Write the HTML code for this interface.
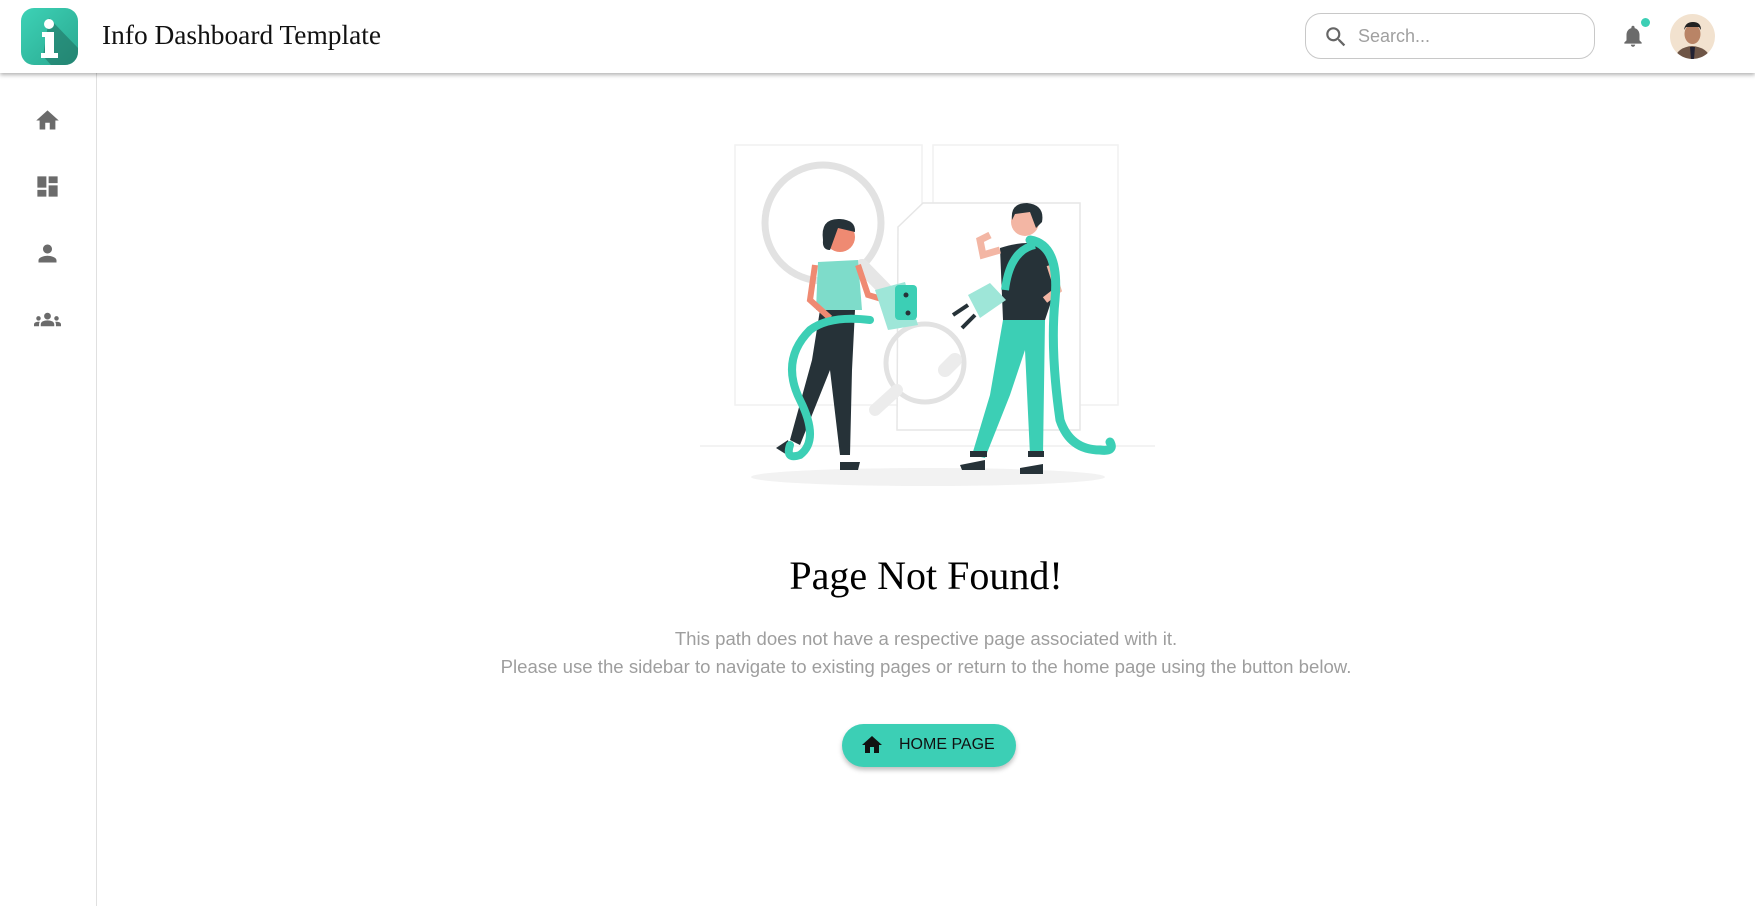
<!DOCTYPE html>
<html><head><meta charset="utf-8"><style>
*{margin:0;padding:0;box-sizing:border-box}
html,body{width:1755px;height:906px;overflow:hidden;background:#fff;font-family:"Liberation Sans",sans-serif}
.hdr{position:absolute;left:0;top:0;width:1755px;height:73px;background:#fff;box-shadow:0 2px 4px rgba(0,0,0,.3);z-index:2}
.logo{position:absolute;left:21px;top:8px;width:57px;height:57px;border-radius:13px;background:linear-gradient(135deg,#3dd2b6,#2aa890);overflow:hidden}
.title{position:absolute;left:102px;top:20px;font-family:"Liberation Serif",serif;font-size:27.4px;color:#111}
.search{position:absolute;left:1305px;top:13px;width:290px;height:46px;border:1px solid #c8c8c8;border-radius:16px}
.search span{position:absolute;left:52px;top:12px;font-size:18px;color:#a0a0a0}
.side{position:absolute;left:0;top:73px;width:97px;height:833px;border-right:1px solid #e0e0e0}
.side svg{position:absolute;left:34px}
h1{position:absolute;left:97px;width:1658px;top:552px;text-align:center;font-family:"Liberation Serif",serif;font-weight:normal;font-size:40px;color:#000}
.p{position:absolute;left:97px;width:1658px;text-align:center;font-size:18.6px;color:#9e9e9e}
.btn{position:absolute;left:842px;top:724px;width:174px;height:43px;border-radius:22px;background:#3ccfb5;box-shadow:0 3px 5px rgba(0,0,0,.25);font-size:16px;color:#111}
.btn span{position:absolute;left:57px;top:12px}
</style></head><body>
<div class="hdr">
 <div class="logo"><svg width="57" height="57"><path d="M28 10 L57 40 L57 57 L30 57 L22 48 Z" fill="#1f6b5c" opacity=".55"/><circle cx="28" cy="16" r="5" fill="#fff"/><path d="M21 24h12v21h4v5H20v-5h4V29h-3z" fill="#fff"/></svg></div>
 <div class="title">Info Dashboard Template</div>
 <div class="search"><svg style="position:absolute;left:17px;top:10px" width="26" height="26" viewBox="0 0 24 24"><path fill="#666" d="M15.5 14h-.79l-.28-.27A6.470 6.470 0 0 0 16 9.5 6.5 6.5 0 1 0 9.5 16c1.61 0 3.09-.59 4.23-1.57l.27.28v.79l5 4.99L20.49 19l-4.99-5zm-6 0C7.010 14 5 11.99 5 9.5S7.010 5 9.5 5 14 7.010 14 9.5 11.99 14 9.5 14z"/></svg><span>Search...</span></div>
 <svg style="position:absolute;left:1620px;top:23px" width="26" height="26" viewBox="0 0 24 24"><path fill="#6b6b6b" d="M12 22c1.1 0 2-.9 2-2h-4c0 1.1.89 2 2 2zm6-6v-5c0-3.07-1.64-5.64-4.5-6.32V4c0-.83-.67-1.5-1.5-1.5s-1.5.67-1.5 1.5v.68C7.63 5.36 6 7.92 6 11v5l-2 2v1h16v-1l-2-2z"/></svg>
 <div style="position:absolute;left:1641px;top:18px;width:9px;height:9px;border-radius:50%;background:#3ccfb5"></div>
 <svg style="position:absolute;left:1670px;top:14px" width="45" height="45"><defs><clipPath id="c"><circle cx="22.5" cy="22.5" r="22.5"/></clipPath></defs><g clip-path="url(#c)"><rect width="45" height="45" fill="#f2e2cf"/><path d="M4 45 Q8 33 22 32 Q37 33 41 45Z" fill="#6e5546"/><path d="M20 33h5l-1 12h-3z" fill="#223"/><ellipse cx="22.5" cy="20" rx="8" ry="10" fill="#b98466"/><path d="M14 16 Q15 8 23 8 Q31 8 31 16 L29 13 L16 13Z" fill="#222"/></g></svg>
</div>
<div class="side">
 <svg style="top:34px" width="27" height="27" viewBox="0 0 24 24"><path fill="#6b6b6b" d="M10 20v-6h4v6h5v-8h3L12 3 2 12h3v8z"/></svg>
 <svg style="top:100px" width="27" height="27" viewBox="0 0 24 24"><path fill="#6b6b6b" d="M3 13h8V3H3v10zm0 8h8v-6H3v6zm10 0h8V11h-8v10zm0-18v6h8V3h-8z"/></svg>
 <svg style="top:167px" width="27" height="27" viewBox="0 0 24 24"><path fill="#6b6b6b" d="M12 12c2.21 0 4-1.79 4-4s-1.79-4-4-4-4 1.79-4 4 1.79 4 4 4zm0 2c-2.67 0-8 1.34-8 4v2h16v-2c0-2.660-5.33-4-8-4z"/></svg>
 <svg style="top:233px" width="27" height="27" viewBox="0 0 24 24"><path fill="#6b6b6b" d="M12 12.75c1.63 0 3.07.39 4.24.9 1.08.48 1.76 1.56 1.76 2.73V18H6v-1.61c0-1.18.68-2.26 1.76-2.73 1.17-.52 2.61-.91 4.24-.91zM4 13c1.1 0 2-.9 2-2s-.9-2-2-2-2 .9-2 2 .9 2 2 2zm1.13 1.1c-.37-.06-.74-.1-1.13-.1-.99 0-1.93.21-2.78.58A2 2 0 0 0 0 16.43V18h4.5v-1.61c0-.83.23-1.61.63-2.29zM20 13c1.1 0 2-.9 2-2s-.9-2-2-2-2 .9-2 2 .9 2 2 2zm4 3.43c0-.81-.48-1.53-1.22-1.85A6.950 6.950 0 0 0 20 14c-.39 0-.76.04-1.13.1.4.68.63 1.46.63 2.29V18H24v-1.57zM12 6c1.66 0 3 1.34 3 3s-1.34 3-3 3-3-1.34-3-3 1.34-3 3-3z"/></svg>
</div>
<svg style="position:absolute;left:0;top:0" width="1755" height="906">
 <g fill="none" stroke="#f1f1f1" stroke-width="1.5">
  <rect x="735" y="145" width="187" height="260"/><rect x="933" y="145" width="185" height="260"/>
 </g>
 <line x1="700" y1="446" x2="1155" y2="446" stroke="#f3f3f3" stroke-width="2"/>
 <ellipse cx="928" cy="477" rx="177" ry="9" fill="#f2f2f2"/>
 <path d="M898 227 L923 203 L1080 203 L1080 430 L897 430 Z" fill="#fff" stroke="#e6e6e6" stroke-width="1.5"/>
 <circle cx="823" cy="223" r="58" fill="none" stroke="#e2e2e2" stroke-width="7"/>
 <line x1="862" y1="266" x2="905" y2="310" stroke="#e6e6e6" stroke-width="14" stroke-linecap="round"/>
 <circle cx="925" cy="363" r="39" fill="none" stroke="#e2e2e2" stroke-width="5"/>
 <line x1="897" y1="390" x2="875" y2="410" stroke="#ececec" stroke-width="12" stroke-linecap="round"/>
 <line x1="945" y1="370" x2="955" y2="360" stroke="#ececec" stroke-width="14" stroke-linecap="round"/>
 <path d="M820 310 L812 360 L790 440 L800 445 L830 370 L840 455 L850 455 L852 370 L855 310Z" fill="#263238"/>
 <path d="M776 448 L788 440 L792 458 Z" fill="#263238"/><path d="M840 462 L860 462 L858 470 L840 470Z" fill="#263238"/>
 <path d="M818 262 L858 260 L862 310 L816 310Z" fill="#7edcca"/>
 <path d="M815 265 L810 300 L830 318" fill="none" stroke="#ef8a72" stroke-width="6"/>
 <path d="M858 265 L868 295 L885 300" fill="none" stroke="#ef8a72" stroke-width="6"/>
 <circle cx="840" cy="237" r="15" fill="#ef8a72"/>
 <path d="M823 240 Q820 218 840 219 Q856 220 855 232 L838 228 L830 250 Q822 250 823 240Z" fill="#263238"/>
 <path d="M870 320 Q830 315 810 330 Q780 360 800 400 Q820 440 800 455 Q785 460 790 445" fill="none" stroke="#3ccfb5" stroke-width="8" stroke-linecap="round"/>
 <path d="M875 290 L905 282 L918 325 L888 330Z" fill="#9ee6d8"/><rect x="895" y="285" width="22" height="35" rx="4" fill="#3ccfb5"/>
 <circle cx="906" cy="295" r="2.5" fill="#263238"/><circle cx="908" cy="313" r="2.5" fill="#263238"/>
 <path d="M1003 320 L990 395 L972 455 L985 458 L1010 395 L1025 350 L1030 455 L1043 455 L1045 320Z" fill="#3ccfb5"/>
 <rect x="970" y="451" width="17" height="6" fill="#263238"/><rect x="1028" y="451" width="16" height="6" fill="#263238"/>
 <path d="M960 465 L985 460 L985 470 L962 470Z" fill="#263238"/><path d="M1020 468 L1043 464 L1043 474 L1020 474Z" fill="#263238"/>
 <path d="M1000 248 Q1030 238 1050 248 L1055 290 L1045 320 L1003 320 Z" fill="#263238"/>
 <path d="M1000 250 L983 255 L980 240 L990 235" fill="none" stroke="#f3b6a4" stroke-width="7"/>
 <path d="M1050 265 L1058 290 L1045 300" fill="none" stroke="#f3b6a4" stroke-width="7"/>
 <circle cx="1025" cy="222" r="14" fill="#f3b6a4"/>
 <path d="M1012 220 Q1010 203 1027 203 Q1045 205 1042 222 L1036 228 L1030 212 L1015 214Z" fill="#263238"/>
 <path d="M1030 240 Q1060 245 1055 300 Q1050 350 1060 420 Q1070 450 1100 450 Q1115 452 1110 442" fill="none" stroke="#3ccfb5" stroke-width="9" stroke-linecap="round"/>
 <path d="M1035 245 Q1010 250 1005 290" fill="none" stroke="#3ccfb5" stroke-width="8"/>
 <path d="M968 295 L990 283 L1006 300 L980 318Z" fill="#9ee6d8"/>
 <line x1="968" y1="305" x2="953" y2="315" stroke="#263238" stroke-width="4"/><line x1="975" y1="315" x2="962" y2="328" stroke="#263238" stroke-width="4"/>
</svg>
<h1>Page Not Found!</h1>
<div class="p" style="top:628px">This path does not have a respective page associated with it.</div>
<div class="p" style="top:656px">Please use the sidebar to navigate to existing pages or return to the home page using the button below.</div>
<div class="btn"><svg style="position:absolute;left:18px;top:9px" width="24" height="24" viewBox="0 0 24 24"><path fill="#111" d="M10 20v-6h4v6h5v-8h3L12 3 2 12h3v8z"/></svg><span>HOME PAGE</span></div>
</body></html>
